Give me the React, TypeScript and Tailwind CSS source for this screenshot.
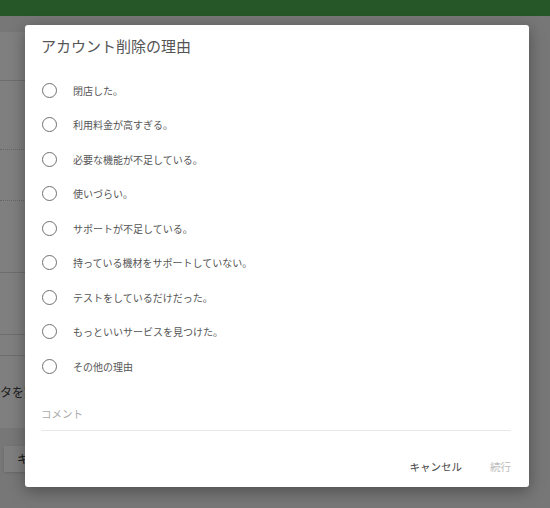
import { useState } from "react"

const REASONS = [
  "閉店した。",
  "利用料金が高すぎる。",
  "必要な機能が不足している。",
  "使いづらい。",
  "サポートが不足している。",
  "持っている機材をサポートしていない。",
  "テストをしているだけだった。",
  "もっといいサービスを見つけた。",
  "その他の理由",
]

const FONT = "font-['Noto_Sans_CJK_JP','Noto_Sans',sans-serif]"

function Backdrop() {
  // 後ろのページ（オーバーレイで暗くなる）
  return (
    <div className="h-[508px] bg-[#eeeeee]">
      <div className="h-[16px] bg-[#4caf50]" />
      <div className="w-[300px] bg-white mt-[16px]">
        <div className="h-[49px] border-b border-[#dddddd]" />
        <div className="h-[69px] border-b border-dotted border-[#cccccc]" />
        <div className="h-[51px] border-b border-dotted border-[#cccccc]" />
        <div className="h-[72px] border-b border-[#dddddd]" />
        <div className="h-[62px] border-b border-[#dddddd]" />
        <div className="h-[21px] border-b border-[#dddddd]" />
        <div className="h-[72px] flex items-center text-[12px] text-[#444]">タを実行する</div>
      </div>
      <div className="mt-[18px] ml-[4px] w-[80px] h-[26px] bg-white shadow flex items-center pl-[13px] text-[12px] text-[#333]">キャンセル</div>
    </div>
  )
}

export default function App() {
  const [reason, setReason] = useState<number | null>(null)

  return (
    <div className={`relative w-[550px] h-[508px] overflow-hidden ${FONT}`}>
      <Backdrop />
      <div className="absolute inset-0 bg-black/50" />

      <div className="absolute left-[25px] top-[25px] w-[504px] h-[462px] bg-white rounded-[3px] shadow-[0_4px_16px_rgba(0,0,0,0.35)] flex flex-col pl-[16px] pr-[18px]">
        <h2 className="mt-[10px] h-[22px] leading-[22px] text-[15px] text-[#555] font-normal">アカウント削除の理由</h2>

        <div className="mt-[16px] flex flex-col">
          {REASONS.map((r, i) => (
            <label key={r} className="h-[34.5px] flex items-center cursor-pointer" onClick={() => setReason(i)}>
              <span className="ml-[1px] w-[15px] h-[15px] rounded-full border-[1.5px] border-[#707070] grid place-items-center">
                {reason === i && <span className="w-[7px] h-[7px] rounded-full bg-[#4caf50]" />}
              </span>
              <span className="ml-[16px] text-[10px] text-[#555]">{r}</span>
            </label>
          ))}
        </div>

        <div className="mt-[15px] h-[32px] flex items-center text-[10.5px] text-[#aaaaaa] border-b border-[#e8e8e8]">
          <input className="w-full outline-none placeholder:text-[#aaaaaa]" placeholder="コメント" />
        </div>

        <div className="mt-[28px] flex justify-end items-center gap-[28px] text-[10.5px]">
          <button className="text-[#444]">キャンセル</button>
          <button className="text-[#bbbbbb]" disabled>続行</button>
        </div>
      </div>
    </div>
  )
}
